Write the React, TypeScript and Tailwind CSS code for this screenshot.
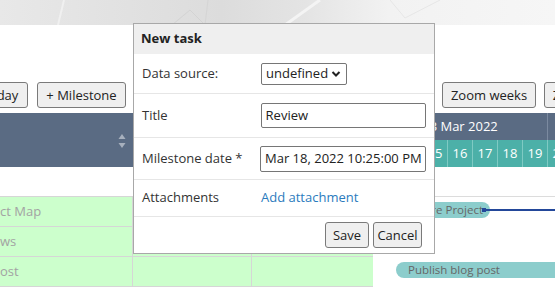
import React from "react"

const days = [13, 14, 15, 16, 17, 18, 19, 20]

const rows = ["ct Map", "ws", "ost"]

function Btn({ children, className = "" }: { children: React.ReactNode; className?: string }) {
  return (
    <button
      className={`flex h-[26px] shrink-0 items-center justify-center whitespace-nowrap rounded-[3px] border border-[#7a7a7a] bg-[#efefef] text-[13px] leading-none text-[#222] ${className}`}
    >
      {children}
    </button>
  )
}

export default function App() {
  return (
    <div className="relative h-[289px] w-[555px] overflow-hidden bg-white font-['Open_Sans',sans-serif] text-[13px] text-[#333]">
      {/* top banner */}
      <div className="relative h-[25px] bg-[linear-gradient(90deg,#e8e8e8_0%,#e2e2e2_20%,#dcdcdc_40%,#e4e4e4_55%,#f2f2f2_70%,#f6f6f6_100%)]">
        <svg className="absolute inset-0" width="555" height="25" viewBox="0 0 555 25">
          <path d="M58 25 L64 0" stroke="#f2f2f2" strokeWidth="2" fill="none" opacity="0.8" />
          <path d="M172 25 L190 10 L205 25" stroke="#cfcfcf" strokeWidth="1" fill="none" opacity="0.7" />
          <path d="M205 25 L208 0" stroke="#d2d2d2" strokeWidth="1" fill="none" opacity="0.7" />
          <path d="M285 25 L320 0" stroke="#f4f4f4" strokeWidth="3" fill="none" />
          <path d="M390 0 L405 18 L440 0" stroke="#e6e6e6" strokeWidth="1" fill="none" />
        </svg>
      </div>

      {/* toolbar */}
      <div className="mt-[57px] flex h-[26px] items-center">
        <Btn className="ml-[-28px] w-[56px]">Today</Btn>
        <Btn className="ml-[9px] w-[89px]">+ Milestone</Btn>
        <Btn className="ml-[316px] w-[94px]">Zoom weeks</Btn>
        <Btn className="ml-[8px] w-[84px]">Zoom days</Btn>
      </div>

      {/* grid + chart */}
      <div className="mt-[5px] flex">
        <div className="w-[373px] shrink-0">
          <div className="flex h-[54px] bg-[#5a6b83]">
            <div className="relative w-[133px]">
              <svg className="absolute left-[118px] top-[20px]" width="8" height="16" viewBox="0 0 8 16">
                <path d="M4 1 L7.5 6 H0.5 Z" fill="#a7b0bd" />
                <path d="M4 15 L7.5 10 H0.5 Z" fill="#a7b0bd" />
              </svg>
            </div>
          </div>
          <div className="h-[30px] border-b border-[#d6d6d6]" />
          {rows.map((r) => (
            <div key={r} className="grid h-[30px] grid-cols-[133px_119px_121px] border-b border-[#d6d6d6] bg-[#ccffcc]">
              <div className="flex items-center border-r border-[#d6d6d6] text-[13px] text-[#a3a3a3]">{r}</div>
              <div className="border-r border-[#d6d6d6]" />
              <div />
            </div>
          ))}
        </div>

        <div className="min-w-0 flex-1">
          <div className="flex h-[27px] bg-[#5a6b83] text-[13px] text-white">
            <div className="flex w-[175px] shrink-0 items-center justify-center border-r border-[#7b8aa0]">13 Mar 2022</div>
            <div className="flex w-[175px] shrink-0 items-center justify-center">20 Mar 2022</div>
          </div>
          <div className="flex h-[27px] bg-[#4cb0a8] text-[13px] text-white">
            {days.map((d) => (
              <div key={d} className="flex w-[25px] shrink-0 items-center justify-center border-r border-[#7fcac3]">
                {d}
              </div>
            ))}
          </div>
          <div className="h-[30px] border-b border-[#dcdcdc]" />
          <div className="relative h-[30px]">
            <div className="absolute left-[0px] top-[5px] flex h-[16px] w-[117px] items-center justify-end overflow-hidden whitespace-nowrap rounded-full bg-[#8ccdcc] pr-[7px] text-[11.5px] text-[#666]">
              Prepare Project
            </div>
            <div className="absolute left-[110px] right-0 top-[12px] h-[2px] bg-[#23489a]" />
            <div className="absolute left-[109px] top-[11px] h-[4px] w-[4px] bg-[#23489a]" />
          </div>
          <div className="h-[30px]" />
          <div className="relative h-[30px]">
            <div className="absolute left-[23px] top-[5px] flex h-[16px] w-[200px] items-center whitespace-nowrap rounded-full bg-[#8ccdcc] pl-[12px] text-[11.5px] text-[#666]">
              Publish blog post
            </div>
          </div>
        </div>
      </div>

      {/* dialog */}
      <div className="absolute left-[133px] top-[23px] w-[302px] border border-[#a8a8a8] bg-white text-[13px]">
        <div className="flex h-[30px] items-center bg-[#efefef] px-[7px] font-bold text-[#222]">New task</div>
        <div className="flex h-[40px] items-center border-b border-[#e6e6e6] px-[8px]">
          <div className="w-[119px]">Data source:</div>
          <div className="flex h-[22px] w-[86px] items-center justify-between rounded-[2px] border border-[#767676] pl-[4px] pr-[5px] text-[#222]">
            undefined
            <svg width="10" height="8" viewBox="0 0 10 8">
              <path d="M1.5 2 L5 5.5 L8.5 2" stroke="#222" strokeWidth="2" fill="none" />
            </svg>
          </div>
        </div>
        <div className="flex h-[44px] items-center border-b border-[#e6e6e6] px-[8px]">
          <div className="w-[119px]">Title</div>
          <div className="flex h-[25px] w-[166px] items-center rounded-[2px] border border-[#767676] px-[4px] text-[#222]">Review</div>
        </div>
        <div className="flex h-[42px] items-center border-b border-[#e6e6e6] px-[8px]">
          <div className="w-[119px]">Milestone date *</div>
          <div className="flex h-[26px] w-[166px] items-center whitespace-nowrap rounded-[2px] border border-[#767676] px-[4px] text-[#222]">
            Mar 18, 2022 10:25:00 PM
          </div>
        </div>
        <div className="flex h-[37px] items-center border-b border-[#e6e6e6] px-[8px]">
          <div className="w-[119px]">Attachments</div>
          <div className="text-[#2b7bbd]">Add attachment</div>
        </div>
        <div className="flex h-[36px] items-center justify-end gap-[4px] pr-[12px]">
          <Btn className="w-[44px]">Save</Btn>
          <Btn className="w-[49px]">Cancel</Btn>
        </div>
      </div>
    </div>
  )
}
